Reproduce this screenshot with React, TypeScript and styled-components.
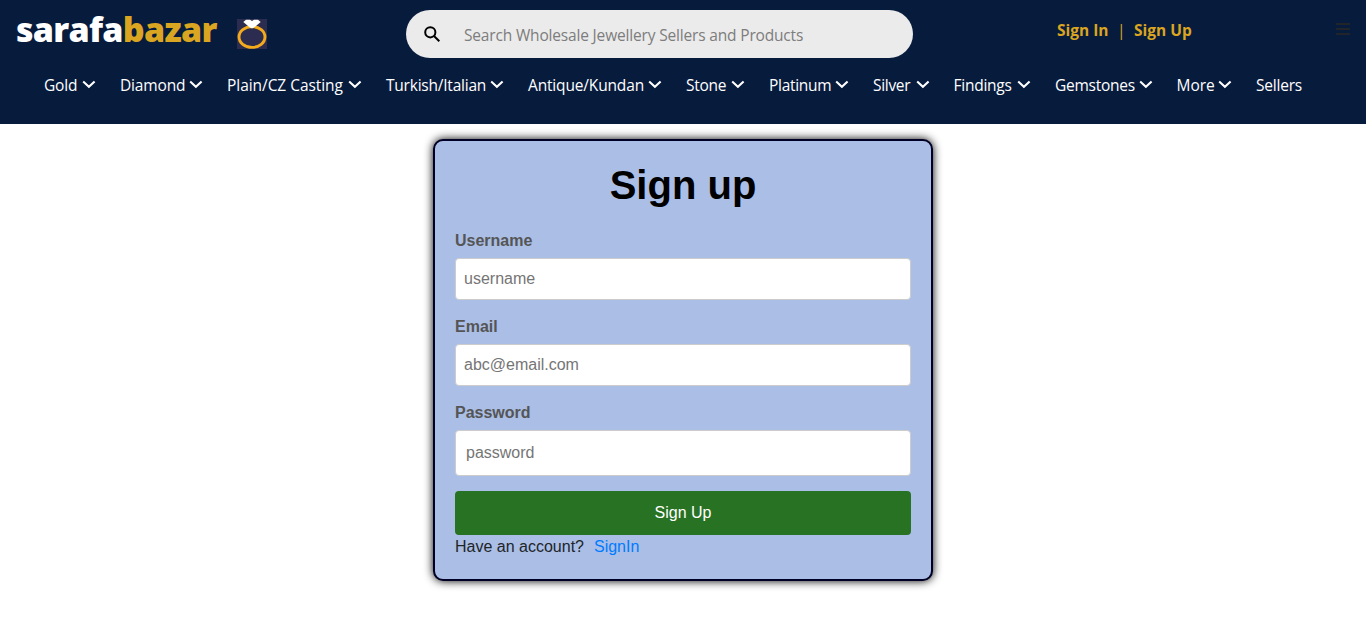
import React from "react";
import styled, { createGlobalStyle } from "styled-components";

const GlobalStyle = createGlobalStyle`
  * { box-sizing: border-box; }
  body { margin: 0; background: #fff; color: #212529; font: 16px/24px "Liberation Sans", Arial, sans-serif; }
  a { text-decoration: none; }
`;

const Page = styled.div`
  min-height: 618px;
`;

const Header = styled.header`
  height: 124px;
  background: #071b3d;
  font-family: "Segoe UI", "Open Sans", sans-serif;
`;

const TopBar = styled.div`
  display: grid;
  grid-template-columns: 406px 507px 144px 1fr auto;
  height: 68px;
  padding-right: 16px;
`;

const Brand = styled.a`
  display: flex;
  align-items: flex-start;
  padding: 10px 0 0 16px;
  color: #fff;
`;

const BrandName = styled.span`
  width: 220px;
  white-space: nowrap;
  font-size: 34px;
  line-height: 39px;
  font-weight: 800;
  letter-spacing: -0.72px;
`;

const BrandAccent = styled.span`
  color: #daa520;
`;

const Ring = styled.svg`
  margin-top: 9px;
  margin-left: 1px;
`;

const SearchBox = styled.label`
  display: flex;
  align-items: center;
  height: 48px;
  margin-top: 10px;
  padding-left: 18px;
  border-radius: 24px;
  background: #ebebeb;
`;

const SearchInput = styled.input`
  flex: 1;
  margin-left: 24px;
  padding: 1px 0 0;
  border: 0;
  outline: 0;
  background: transparent;
  font: 15.5px/24px "Segoe UI", "Open Sans", sans-serif;
  letter-spacing: -0.17px;
  &::placeholder { color: #7d7d7d; opacity: 1; }
`;

const Account = styled.div`
  grid-column: 4;
  display: flex;
  gap: 8.5px;
  padding-top: 18px;
  color: #daa520;
  font-size: 15.5px;
  line-height: 24px;
`;

const AccountLink = styled.a`
  color: #daa520;
  font-weight: 700;
`;

const MenuIcon = styled.svg`
  margin-top: 23px;
`;

const Nav = styled.nav`
  display: flex;
  padding: 5px 0 0 44px;
`;

const NavItem = styled.a`
  display: flex;
  align-items: center;
  margin-right: 24px;
  color: #fff;
  font-size: 15.5px;
  line-height: 24px;
  white-space: nowrap;
`;

const NavLabel = styled.span<{ $width: number; $tracking: number }>`
  width: ${(p) => p.$width}px;
  letter-spacing: ${(p) => p.$tracking}px;
`;

const Card = styled.form`
  width: 500px;
  height: 442px;
  margin: 15px auto 0;
  padding: 20px;
  border: 2px solid #000026;
  border-radius: 10px;
  background: #aabee6;
  box-shadow: 0 0 10px #000;
`;

const Title = styled.h1`
  margin: 0 0 20px;
  color: #000;
  font-size: 40px;
  line-height: 48px;
  font-weight: 700;
  text-align: center;
`;

const Field = styled.div`
  display: flex;
  flex-direction: column;
  margin-bottom: 15px;
`;

const FieldLabel = styled.label`
  margin-bottom: 5px;
  color: #555;
  font-weight: 700;
`;

const Input = styled.input<{ $roomy?: boolean }>`
  height: ${(p) => (p.$roomy ? 46 : 42)}px;
  padding: 0 ${(p) => (p.$roomy ? 10 : 8)}px;
  border: 1px solid #ccc;
  border-radius: 4px;
  background: #fff;
  font: 16px "Liberation Sans", Arial, sans-serif;
  &::placeholder { color: #757575; opacity: 1; }
`;

const Submit = styled.button`
  display: block;
  width: 100%;
  height: 44px;
  margin-top: 15px;
  padding: 0;
  border: 0;
  border-radius: 4px;
  background: #287223;
  color: #fff;
  font: 16px "Liberation Sans", Arial, sans-serif;
`;

const SignInLink = styled.a`
  margin-left: 10px;
  color: #007bff;
`;

const categories = [
  { name: "Gold", width: 38, tracking: -0.2 },
  { name: "Diamond", width: 69, tracking: -0.15 },
  { name: "Plain/CZ Casting", width: 121, tracking: -0.05 },
  { name: "Turkish/Italian", width: 104, tracking: -0.22 },
  { name: "Antique/Kundan", width: 120, tracking: -0.16 },
  { name: "Stone", width: 45, tracking: -0.25 },
  { name: "Platinum", width: 66, tracking: -0.3 },
  { name: "Silver", width: 42.5, tracking: -0.3 },
  { name: "Findings", width: 63.5, tracking: -0.25 },
  { name: "Gemstones", width: 83.5, tracking: -0.25 },
  { name: "More", width: 41.5, tracking: 0 },
];

const Chevron = () => (
  <svg width="14" height="10" viewBox="0 0 14 10" fill="none" stroke="#fff" strokeWidth="2.1">
    <path d="M1.2 1.5 6.9 6.8 12.6 1.5" />
  </svg>
);

export default function App() {
  return (
    <Page>
      <GlobalStyle />
      <Header>
        <TopBar>
          <Brand>
            <BrandName>sarafa<BrandAccent>bazar</BrandAccent></BrandName>
            <Ring width="30" height="30" viewBox="0 0 30 30">
              <path fill="#2b2c50" d="M0 0h30v30H0z" />
              <ellipse cx="15" cy="18" rx="13" ry="10.4" fill="none" stroke="#f3aa1c" strokeWidth="2.9" />
              <path fill="#fff" d="M9 .7h4l2 1.2 2-1.2h4L23.7 3 17.5 8.2 15 9.6l-2.5-1.4L6.3 3z" />
            </Ring>
          </Brand>
          <SearchBox>
            <svg width="16" height="16" viewBox="0 0 16 16" fill="none" stroke="#000" strokeWidth="2">
              <circle cx="6.3" cy="6.3" r="5.1" />
              <path d="m10 10 5.3 5.3" />
            </svg>
            <SearchInput placeholder="Search Wholesale Jewellery Sellers and Products" />
          </SearchBox>
          <Account>
            <AccountLink>Sign In</AccountLink>
            <span>|</span>
            <AccountLink>Sign Up</AccountLink>
          </Account>
          <MenuIcon width="14" height="12" viewBox="0 0 14 12" fill="#212529">
            <path d="M0 0h14v2H0zM0 5h14v2H0zM0 10h14v2H0z" />
          </MenuIcon>
        </TopBar>
        <Nav>
          {categories.map((c) => (
            <NavItem key={c.name}>
              <NavLabel $width={c.width} $tracking={c.tracking}>{c.name}</NavLabel>
              <Chevron />
            </NavItem>
          ))}
          <NavItem><NavLabel $width={46} $tracking={-0.2}>Sellers</NavLabel></NavItem>
        </Nav>
      </Header>
      <Card>
        <Title>Sign up</Title>
        <Field>
          <FieldLabel>Username</FieldLabel>
          <Input placeholder="username" />
        </Field>
        <Field>
          <FieldLabel>Email</FieldLabel>
          <Input placeholder="abc@email.com" />
        </Field>
        <Field>
          <FieldLabel>Password</FieldLabel>
          <Input $roomy type="password" placeholder="password" />
        </Field>
        <Submit type="button">Sign Up</Submit>
        Have an account?<SignInLink>SignIn</SignInLink>
      </Card>
    </Page>
  );
}
